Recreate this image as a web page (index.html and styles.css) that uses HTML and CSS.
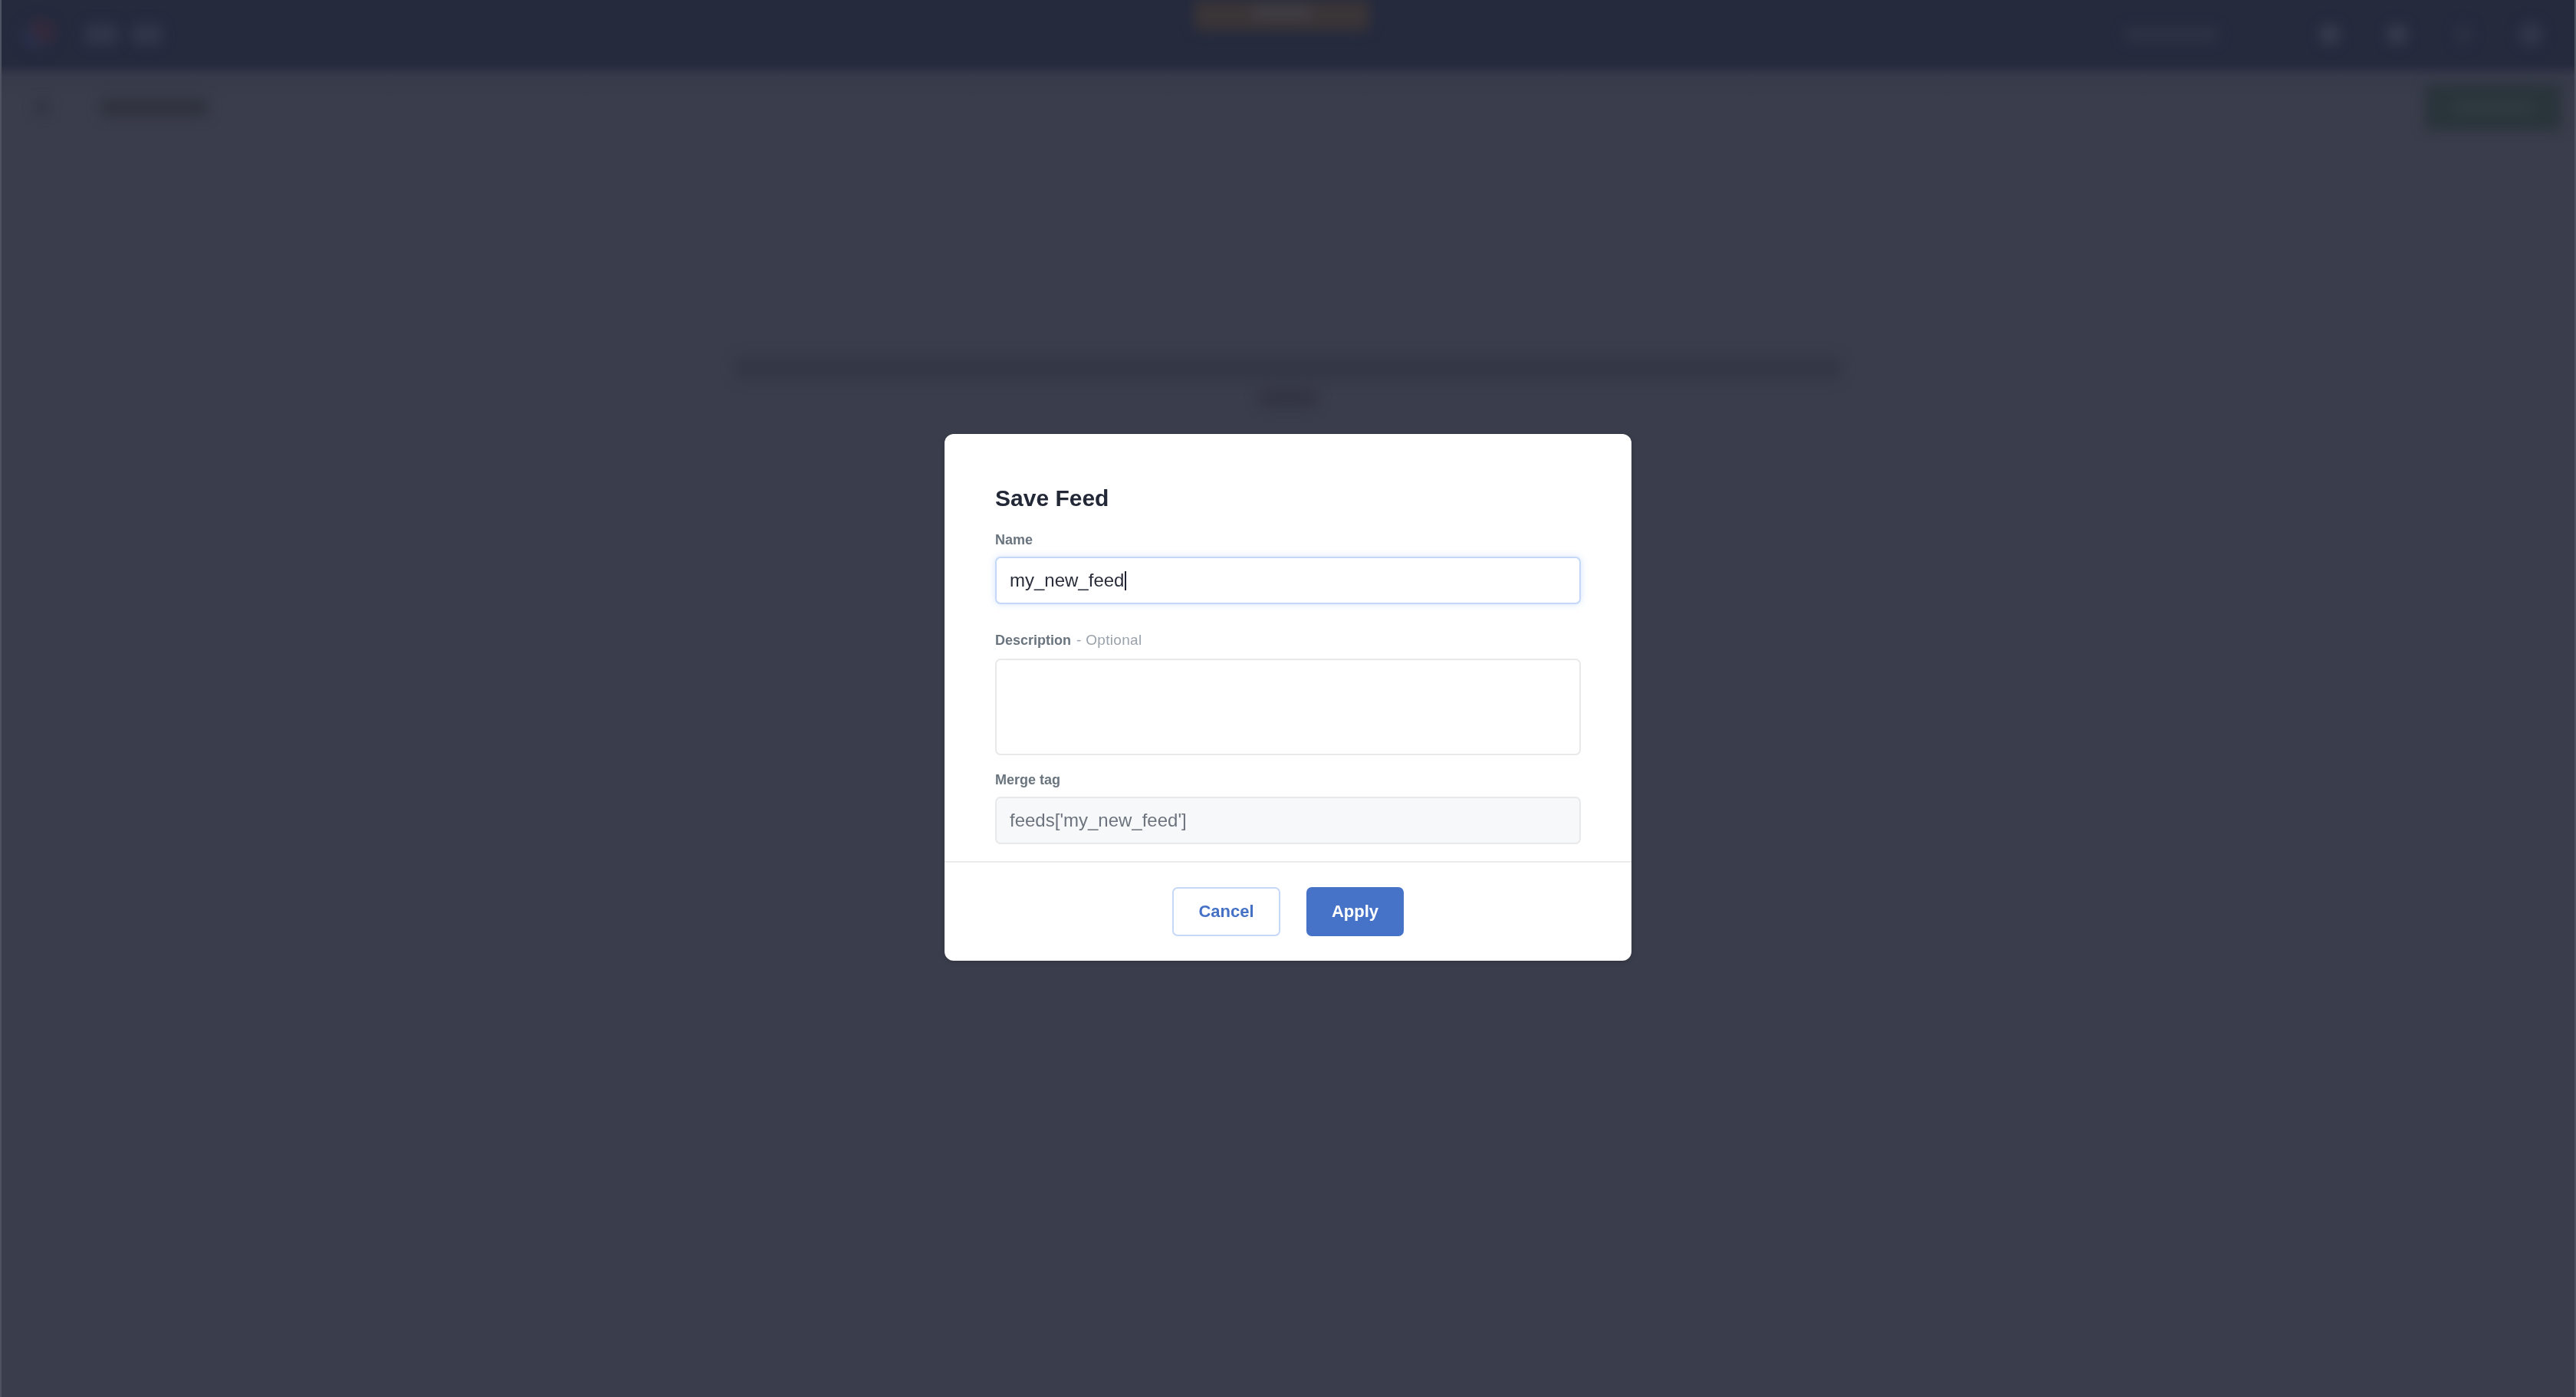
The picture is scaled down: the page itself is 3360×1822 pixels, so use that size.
FILE: index.html
```html
<!DOCTYPE html>
<html lang="en">
<head>
    <meta charset="UTF-8">
    <meta name="viewport" content="width=device-width, initial-scale=1.0">
    <title>Save Feed</title>
    <link rel="stylesheet" href="styles.css">
</head>
<body>

    <!-- app behind the modal, dimmed and blurred -->
    <div class="app" aria-hidden="true">
        <header class="topbar">
            <div class="brand">
                <span class="brand-mark blur"></span>
                <span class="blob brand-word blur"></span>
                <span class="blob brand-word short blur"></span>
            </div>
            <div class="top-center">
                <span class="top-pill blur"><span class="top-pill-text"></span></span>
            </div>
            <div class="top-right">
                <span class="blob account blur"></span>
                <span class="blob icon blur"></span>
                <span class="blob icon blur"></span>
                <span class="blob icon faint blur"></span>
                <span class="blob icon avatar blur"></span>
            </div>
        </header>

        <div class="subbar">
            <span class="blob back blur"></span>
            <span class="blob page-title blur"></span>
            <span class="save-btn blur"><span class="save-btn-text"></span></span>
        </div>

        <main class="canvas">
            <span class="blob canvas-bar blur"></span>
            <span class="blob canvas-dot blur"></span>
        </main>
    </div>

    <div class="overlay">
        <div class="modal" role="dialog" aria-labelledby="modalTitle">
            <div class="modal-body">
                <h2 class="modal-title" id="modalTitle">Save Feed</h2>

                <div class="field field-name">
                    <label class="field-label" for="feedName">Name</label>
                    <div class="input focused" id="feedName">my_new_feed<span class="caret"></span></div>
                </div>

                <div class="field field-desc">
                    <label class="field-label" for="feedDesc">Description <span class="optional">- Optional</span></label>
                    <div class="input textarea" id="feedDesc"></div>
                </div>

                <div class="field">
                    <label class="field-label" for="mergeTag">Merge tag</label>
                    <div class="input readonly" id="mergeTag">feeds['my_new_feed']</div>
                </div>
            </div>

            <div class="modal-footer">
                <button class="btn btn-secondary" type="button">Cancel</button>
                <button class="btn btn-primary" type="button">Apply</button>
            </div>
        </div>
    </div>

</body>
</html>
```

FILE: styles.css
```css
html, body {
    margin: 0;
    padding: 0;
    height: 100%;
}

body {
    font-family: "Liberation Sans", Arial, sans-serif;
    background-color: #3a3d4b;
    overflow: hidden;
}

/* ---------- background app ---------- */

.app {
    height: 100%;
    box-sizing: border-box;
    border-left: 2px solid #4f5261;
    border-right: 2px solid #4f5261;
    background: linear-gradient(to bottom, #252a3d 0, #252a3d 84px, #373a4a 100px, #3a3d4b 130px);
}

.blur {
    filter: blur(8px);
}

.blob {
    display: block;
    border-radius: 8px;
}

.topbar {
    height: 90px;
    display: grid;
    grid-template-columns: 1fr auto 1fr;
    align-items: center;
    padding: 0 41px 0 25px;
}

.brand {
    display: flex;
    align-items: center;
    gap: 16px;
}

.brand-mark {
    width: 46px;
    height: 42px;
    border-radius: 50%;
    margin-right: 21px;
    background: radial-gradient(circle at 70% 30%, #342a3c 0, #342a3c 30%, transparent 60%),
                radial-gradient(circle at 25% 75%, #27304b 0, #27304b 30%, transparent 60%);
}

.brand-word {
    width: 45px;
    height: 28px;
    background-color: #30364a;
}

.brand-word.short {
    width: 41px;
}

.top-center {
    align-self: start;
}

.top-pill {
    display: flex;
    justify-content: center;
    width: 228px;
    height: 40px;
    background-color: #3a3537;
    border-radius: 0 0 8px 8px;
}

.top-pill-text {
    width: 76px;
    height: 20px;
    margin-top: 6px;
    border-radius: 6px;
    background-color: #3f3d44;
}

.top-right {
    display: flex;
    align-items: center;
    justify-content: flex-end;
    gap: 60px;
}

.account {
    width: 124px;
    height: 20px;
    margin-right: 71px;
    background-color: #2d3244;
}

.icon {
    width: 28px;
    height: 28px;
    border-radius: 50%;
    background-color: #363b4c;
}

.icon.faint {
    width: 24px;
    background-color: #2b3042;
}

.icon.avatar {
    width: 32px;
    height: 32px;
    background-color: #31364a;
}

.subbar {
    height: 100px;
    display: flex;
    align-items: center;
    padding: 0 17px 0 44px;
}

.back {
    width: 18px;
    height: 18px;
    background-color: #30333f;
}

.page-title {
    width: 142px;
    height: 24px;
    margin-left: 66px;
    background-color: #30333f;
}

.save-btn {
    margin-left: auto;
    width: 178px;
    height: 60px;
    display: flex;
    align-items: center;
    justify-content: center;
    border-radius: 8px;
    background-color: #29343b;
}

.save-btn-text {
    width: 104px;
    height: 16px;
    border-radius: 6px;
    background-color: #2f3a41;
}

.canvas {
    display: flex;
    flex-direction: column;
    align-items: center;
    padding-top: 275px;
}

.canvas-bar {
    width: 1446px;
    height: 30px;
    border-radius: 14px;
    background-color: #343746;
}

.canvas-dot {
    width: 80px;
    height: 28px;
    margin-top: 10px;
    border-radius: 14px;
    background-color: #333543;
}

/* ---------- modal ---------- */

.overlay {
    position: fixed;
    inset: 0;
    display: flex;
    align-items: center;
    justify-content: center;
    padding-bottom: 3px;
}

.modal {
    width: 896px;
    background-color: #fff;
    border-radius: 12px;
    box-shadow: 0 2px 6px rgba(0, 0, 0, 0.15);
}

.modal-body {
    padding: 66px 66px 22px;
}

.modal-title {
    margin: 0 0 25px;
    font-size: 30px;
    line-height: 36px;
    font-weight: 700;
    color: #232837;
}

.field-label {
    display: block;
    font-size: 18px;
    line-height: 22px;
    font-weight: 700;
    color: #6a747e;
    margin-bottom: 11px;
}

.optional {
    margin-left: 2px;
    font-size: 19px;
    font-weight: 400;
    letter-spacing: 0.3px;
    color: #9aa2ab;
}

.field-name {
    margin-bottom: 36px;
}

.field-desc {
    margin-bottom: 21px;
}

.field-desc .field-label {
    margin-bottom: 13px;
}

.input {
    height: 62px;
    box-sizing: border-box;
    display: flex;
    align-items: center;
    padding: 0 16px 0 17px;
    border: 2px solid #e8e9eb;
    border-radius: 7px;
    background-color: #fff;
    font-size: 24px;
    color: #2a2e3a;
}

.input.focused {
    border-color: #c4d7f8;
    box-shadow: 0 0 10px rgba(70, 130, 230, 0.22);
}

.caret {
    display: inline-block;
    width: 2px;
    height: 25px;
    margin-left: 1px;
    background-color: #1f2230;
}

.input.textarea {
    height: 126px;
}

.input.readonly {
    background-color: #f7f8fa;
    color: #6d747d;
}

.modal-footer {
    display: flex;
    justify-content: center;
    gap: 34px;
    padding: 32px;
    border-top: 2px solid #ebebeb;
}

.btn {
    height: 64px;
    box-sizing: border-box;
    border-radius: 7px;
    font-family: inherit;
    font-size: 22px;
    font-weight: 700;
    cursor: pointer;
}

.btn-secondary {
    width: 141px;
    background-color: #fff;
    border: 2px solid #c5d8f8;
    color: #4471c5;
}

.btn-primary {
    width: 127px;
    background-color: #4672c8;
    border: 2px solid #4672c8;
    color: #fff;
}
```
